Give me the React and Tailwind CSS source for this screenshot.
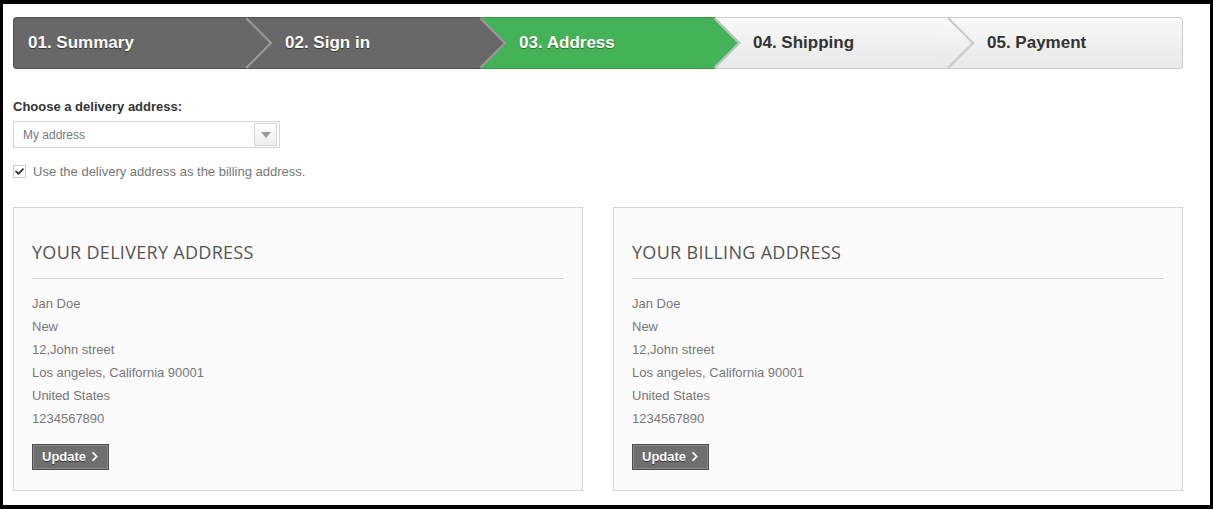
import React from 'react';
import { FaChevronRight, FaCheck } from 'react-icons/fa';

const steps = [
  { label: '01. Summary', kind: 'done' },
  { label: '02. Sign in', kind: 'done' },
  { label: '03. Address', kind: 'current' },
  { label: '04. Shipping', kind: 'todo' },
  { label: '05. Payment', kind: 'todo' },
];

const stepStyles = {
  done: {
    box: 'bg-[#686868] border-[#525252] text-white [text-shadow:0_1px_1px_#333]',
    arrow: 'bg-[#686868] border-[#9c9c9c]',
  },
  current: {
    box: 'bg-[#44b256] border-[#3a9a4a] text-white [text-shadow:0_1px_1px_#2a6f35]',
    arrow: 'bg-[#44b256] border-[#c2c2c2]',
  },
  todo: {
    box: 'bg-linear-to-b from-[#f9f9f9] to-[#e8e8e8] border-[#cccccc] text-[#333333]',
    arrow: 'bg-linear-to-br from-[#f9f9f9] to-[#e8e8e8] border-[#c8c8c8]',
  },
};

function Stepper() {
  return (
    <div className="flex w-[1170px] h-[52px]">
      {steps.map((step, i) => {
        const first = i === 0;
        const last = i === steps.length - 1;
        const s = stepStyles[step.kind];
        return (
          <div
            key={step.label}
            className={`relative flex items-center w-[234px] h-[52px] border-y text-[17px] font-bold ${s.box} ${
              first ? 'border-l rounded-l-[4px] pl-[14px]' : 'pl-[38px]'
            } ${last ? 'border-r rounded-r-[4px]' : ''}`}
          >
            <span>{step.label}</span>
            {!last && (
              <div
                className={`absolute z-10 top-[7px] right-[-18px] w-[36px] h-[36px] rotate-45 border-t-2 border-r-2 ${s.arrow}`}
              />
            )}
          </div>
        );
      })}
    </div>
  );
}

function AddressBox({ title }) {
  const lines = ['Jan Doe', 'New', '12,John street', 'Los angeles, California 90001', 'United States', '1234567890'];
  return (
    <div className="w-[570px] h-[284px] bg-[#fbfbfb] border border-[#d6d4d4] px-[18px] pt-[32px]">
      <h3 className="font-['Open_Sans',sans-serif] text-[18px] leading-[24px] tracking-[0.3px] uppercase text-[#555454] pb-[14px] border-b border-[#d6d4d4]">
        {title}
      </h3>
      <ul className="mt-[13px] text-[13px] text-[#777777]">
        {lines.map((l) => (
          <li key={l} className="leading-[23px]">{l}</li>
        ))}
      </ul>
      <button className="mt-[14px] flex items-center gap-[5px] h-[26px] w-[77px] px-[9px] bg-[#6f6f6f] border border-[#4d4d4d] shadow-[inset_0_0_0_1px_#8a8a8a] text-white text-[13px] font-bold [text-shadow:0_1px_0_#333]">
        Update
        <FaChevronRight className="text-[11px]" />
      </button>
    </div>
  );
}

export default function App() {
  return (
    <div className="w-[1213px] h-[509px] bg-white border-black border-l-[3px] border-r-[3px] border-t-4 border-b-4 pl-[10px] pt-[13px] font-['Liberation_Sans',Arial,sans-serif]">
      <Stepper />

      <p className="mt-[29px] text-[13px] leading-[18px] font-bold text-[#333333]">Choose a delivery address:</p>
      <div className="mt-[5px] flex items-center justify-between w-[267px] h-[27px] bg-white border border-[#d6d4d4] pl-[9px] pr-[2px]">
        <span className="text-[12px] text-[#777777]">My address</span>
        <div className="flex items-center justify-center w-[23px] h-[23px] border border-[#d6d4d4] bg-linear-to-b from-white to-[#eeeeee]">
          <div className="w-0 h-0 border-l-[5px] border-r-[5px] border-t-[6px] border-l-transparent border-r-transparent border-t-[#9a9a9a]" />
        </div>
      </div>

      <label className="mt-[14px] flex items-center gap-[7px] text-[13px] text-[#777777]">
        <span className="flex items-center justify-center w-[13px] h-[13px] border border-[#c9c9c9] bg-white">
          <FaCheck className="text-[9px] text-[#333333]" />
        </span>
        Use the delivery address as the billing address.
      </label>

      <div className="mt-[25px] flex gap-[30px]">
        <AddressBox title="Your delivery address" />
        <AddressBox title="Your billing address" />
      </div>
    </div>
  );
}
